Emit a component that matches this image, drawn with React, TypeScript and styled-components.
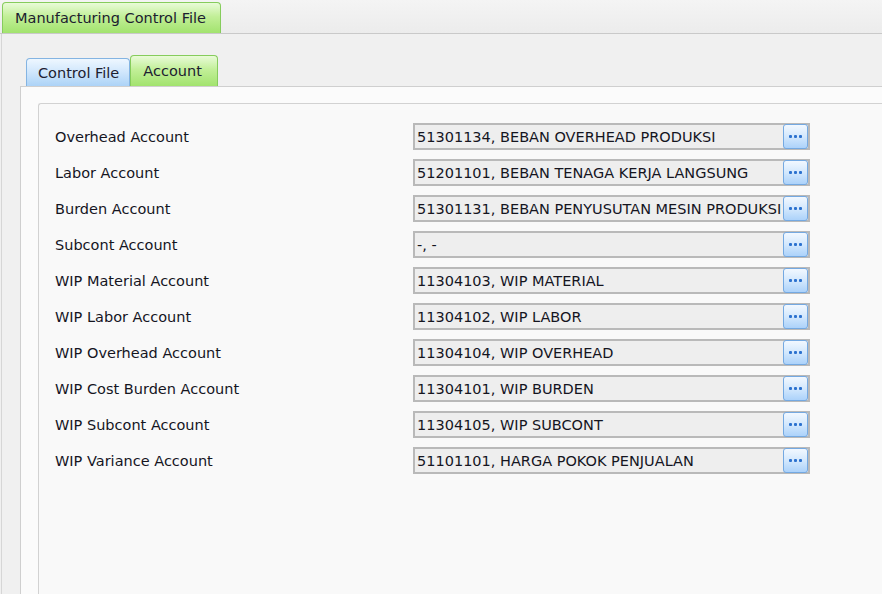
import React from "react";
import styled, { createGlobalStyle } from "styled-components";

const GlobalStyle = createGlobalStyle`
  html, body {
    margin: 0;
    padding: 0;
    background: #f0f0f0;
    overflow: hidden;
  }
  #root {
    width: 882px;
    height: 594px;
  }
`;

const accounts = [
  { label: "Overhead Account", value: "51301134, BEBAN OVERHEAD PRODUKSI" },
  { label: "Labor Account", value: "51201101, BEBAN TENAGA KERJA LANGSUNG" },
  { label: "Burden Account", value: "51301131, BEBAN PENYUSUTAN MESIN PRODUKSI" },
  { label: "Subcont Account", value: "-, -" },
  { label: "WIP Material Account", value: "11304103, WIP MATERIAL" },
  { label: "WIP Labor Account", value: "11304102, WIP LABOR" },
  { label: "WIP Overhead Account", value: "11304104, WIP OVERHEAD" },
  { label: "WIP Cost Burden Account", value: "11304101, WIP BURDEN" },
  { label: "WIP Subcont Account", value: "11304105, WIP SUBCONT" },
  { label: "WIP Variance Account", value: "51101101, HARGA POKOK PENJUALAN" },
];

const Screen = styled.div`
  display: flex;
  flex-direction: column;
  width: 882px;
  height: 594px;
  font-family: "DejaVu Sans", Verdana, sans-serif;
  font-size: 14.5px;
  color: #15151f;
`;

const TopStrip = styled.div`
  display: flex;
  align-items: flex-end;
  height: 33px;
  padding-left: 2px;
  background: linear-gradient(#f4f4f4, #ececec);
  border-bottom: 1px solid #c9c9c9;
`;

// tab look: tone picks the colour, h / pl / pr the size of each tab
const Tab = styled.div<{ $tone: "green" | "blue"; $h: number; $pl: number; $pr: number }>`
  display: flex;
  align-items: center;
  height: ${(p) => p.$h}px;
  padding: 0 ${(p) => p.$pr}px 0 ${(p) => p.$pl}px;
  box-sizing: border-box;
  border: 1px solid ${(p) => (p.$tone === "green" ? "#86cc5c" : "#84b4e2")};
  border-bottom: none;
  border-radius: 4px 4px 0 0;
  background: ${(p) =>
    p.$tone === "green"
      ? "linear-gradient(#e9fbd8 0%, #c2ef98 45%, #a2e36e 100%)"
      : "linear-gradient(#eef7ff 0%, #cfe6fc 50%, #acd3f7 100%)"};
  color: #1c2030;
  white-space: nowrap;
`;

const OuterPanel = styled.div`
  flex: 1;
  display: flex;
  flex-direction: column;
  margin-left: 1px;
  border-left: 1px solid #d6d6d6;
  padding: 21px 0 0 18px;
  background: #f0f0f0;
  min-height: 0;
`;

const SubTabs = styled.div`
  display: flex;
  align-items: flex-end;
  gap: 0;
  padding-left: 6px;
  height: 31px;
`;

const InnerPanel = styled.div`
  flex: 1;
  background: #fbfbfb;
  border-top: 1px solid #cfcfcf;
  border-left: 1px solid #cfcfcf;
  padding: 16px 0 0 17px;
  display: flex;
  min-height: 0;
`;

const GroupBox = styled.div`
  flex: 1;
  background: #f9f9f9;
  border-top: 1px solid #d2d2d2;
  border-left: 1px solid #d2d2d2;
  border-radius: 3px 0 0 0;
  padding: 19px 0 0 16px;
  display: flex;
  flex-direction: column;
  gap: 9px;
`;

const Row = styled.div`
  display: flex;
  align-items: center;
  height: 27px;
`;

const Label = styled.div`
  width: 358px;
  white-space: nowrap;
`;

const Field = styled.div`
  display: flex;
  align-items: center;
  width: 397px;
  height: 27px;
  box-sizing: border-box;
  border: 2px solid #b9b9b9;
  background: #eeeeee;
  padding: 0 0 0 2px;
`;

const FieldText = styled.div`
  flex: 1;
  overflow: hidden;
  white-space: nowrap;
`;

const LookupButton = styled.div`
  display: flex;
  align-items: center;
  justify-content: center;
  gap: 2px;
  width: 25px;
  height: 25px;
  flex-shrink: 0;
  box-sizing: border-box;
  border: 1px solid #74a9e2;
  border-radius: 3px;
  background: linear-gradient(#f2f8ff 0%, #d3e8fd 50%, #acd2fa 100%);
`;

const Dot = styled.span`
  width: 3px;
  height: 3px;
  border-radius: 1px;
  background: #2c72cf;
`;

export default function App() {
  return (
    <>
      <GlobalStyle />
      <Screen>
        <TopStrip>
          <Tab $tone="green" $h={31} $pl={12} $pr={14}>
            Manufacturing Control File
          </Tab>
        </TopStrip>
        <OuterPanel>
          <SubTabs>
            <Tab $tone="blue" $h={28} $pl={11} $pr={10}>
              Control File
            </Tab>
            <Tab $tone="green" $h={31} $pl={12} $pr={15}>
              Account
            </Tab>
          </SubTabs>
          <InnerPanel>
            <GroupBox>
              {accounts.map((a) => (
                <Row key={a.label}>
                  <Label>{a.label}</Label>
                  <Field>
                    <FieldText>{a.value}</FieldText>
                    <LookupButton>
                      <Dot />
                      <Dot />
                      <Dot />
                    </LookupButton>
                  </Field>
                </Row>
              ))}
            </GroupBox>
          </InnerPanel>
        </OuterPanel>
      </Screen>
    </>
  );
}
